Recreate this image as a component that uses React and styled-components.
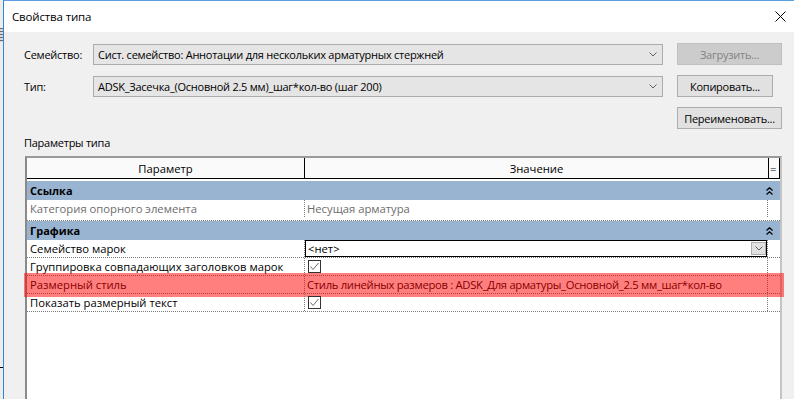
import React from 'react';
import styled, { createGlobalStyle } from 'styled-components';

const GlobalStyle = createGlobalStyle`
  html, body {
    margin: 0;
    padding: 0;
  }
  body {
    font-family: "Open Sans", "Noto Sans", sans-serif;
    font-size: 11px;
    color: #000;
    background: #f0f0f0;
  }
`;

const Screen = styled.div`
  width: 794px;
  height: 399px;
  overflow: hidden;
  display: flex;
  background: #f0f0f0;
`;

const Behind = styled.div`
  width: 3px;
  flex: none;
  display: flex;
  flex-direction: column;
  background: #ececec;
`;

const BehindIcon = styled.div`
  margin-top: 28px;
  height: 14px;
  background: repeating-linear-gradient(180deg, #6a6a6a 0 1px, #d8d8d8 1px 3px);
`;

const BehindTick = styled.div`
  margin-top: 325px;
  height: 1px;
  background: #000;
`;

const Window = styled.div`
  flex: 1;
  display: flex;
  flex-direction: column;
  border-left: 1px solid #2b88d8;
  border-top: 1px solid #5a9ee0;
`;

const TitleBar = styled.div`
  height: 31px;
  flex: none;
  display: flex;
  align-items: center;
  justify-content: space-between;
  padding: 0 8px 0 8px;
  background: #fff;
  font-size: 11.5px;
  letter-spacing: -0.15px;
`;

const Content = styled.div`
  flex: 1;
  display: flex;
  flex-direction: column;
  padding: 11px 0 0 20px;
  letter-spacing: -0.25px;
`;

const Form = styled.div`
  display: grid;
  grid-template-columns: 69px 570px 119px;
  grid-auto-rows: 22px;
  row-gap: 10px;
  align-items: center;
`;

const Label = styled.span`
  grid-column: 1;
  white-space: nowrap;
`;

const Combo = styled.div`
  grid-column: 2;
  height: 21px;
  box-sizing: border-box;
  display: flex;
  align-items: center;
  justify-content: space-between;
  padding: 0 5px 0 4px;
  background: #e5e5e5;
  border: 1px solid #acacac;
  white-space: nowrap;
`;

const Button = styled.div`
  width: ${(p) => p.$w}px;
  height: 22px;
  box-sizing: border-box;
  display: flex;
  align-items: center;
  justify-content: center;
  background: ${(p) => (p.$disabled ? '#cccccc' : '#e1e1e1')};
  border: 1px solid ${(p) => (p.$disabled ? '#bfbfbf' : '#adadad')};
  color: ${(p) => (p.$disabled ? '#838383' : '#000')};
  white-space: nowrap;
`;

const ButtonCell = styled.div`
  grid-column: 3;
  display: flex;
  justify-content: flex-start;
  padding-left: 14px;
`;

const SectionLabel = styled.div`
  margin-top: 6px;
  line-height: 16px;
`;

const Table = styled.div`
  margin: 5px 0 0 1px;
  width: 757px;
  height: 260px;
  flex: none;
  box-sizing: border-box;
  background: #fff;
  border-top: 2px solid #9a9a9a;
  border-left: 2px solid #8a8a8a;
  border-right: 2px solid #c4c4c4;
  display: flex;
  flex-direction: column;
  font-size: 11.25px;
  letter-spacing: 0;
`;

const Header = styled.div`
  display: grid;
  grid-template-columns: 278px 463px 12px;
  height: 21px;
  box-sizing: border-box;
  background: #fafafa;
  border-bottom: 1px solid #000;
`;

const HeadCell = styled.div`
  display: flex;
  align-items: center;
  justify-content: ${(p) => (p.$left ? 'flex-start' : 'center')};
  border-right: ${(p) => (p.$edge ? '1px solid #000' : 'none')};
  border-left: ${(p) => (p.$boxed ? '1px solid #000' : 'none')};
  padding-left: ${(p) => (p.$boxed ? '1px' : '0')};
`;

const Body = styled.div`
  padding-top: 2px;
  display: flex;
  flex-direction: column;
`;

const GroupRow = styled.div`
  height: 19px;
  display: flex;
  align-items: center;
  justify-content: space-between;
  padding: 0 7px 0 3px;
  background: #99b4d1;
  font-weight: 700;
  font-size: 11px;
`;

const Row = styled.div`
  position: relative;
  height: ${(p) => p.$h}px;
  box-sizing: border-box;
  display: grid;
  grid-template-columns: 278px 463px 12px;
  padding-bottom: ${(p) => (p.$h > 19 ? 3 : 0)}px;
  border-bottom: 1px dotted #7a7a7a;
  color: ${(p) => (p.$muted ? '#6d6d6d' : '#000')};
`;

const NameCell = styled.div`
  display: flex;
  align-items: center;
  padding-left: 3px;
  border-right: 1px dotted #7a7a7a;
  white-space: nowrap;
  overflow: hidden;
`;

const ValueCell = styled.div`
  display: flex;
  align-items: center;
  padding-left: 2px;
  border-right: 1px dotted #7a7a7a;
  white-space: nowrap;
  overflow: hidden;
  letter-spacing: ${(p) => (p.$tight ? '-0.3px' : '0')};
`;

const InlineSelect = styled.div`
  margin-left: -2px;
  flex: 1;
  align-self: stretch;
  box-sizing: border-box;
  display: flex;
  align-items: center;
  justify-content: space-between;
  padding: 0 0 0 2px;
  border: 1px solid #000;
  background: #fff;
`;

const DropButton = styled.div`
  width: 15px;
  height: 13px;
  box-sizing: border-box;
  display: flex;
  align-items: center;
  justify-content: center;
  background: #e1e1e1;
  border: 1px solid #adadad;
`;

const CheckBox = styled.div`
  width: 13px;
  height: 13px;
  margin-left: 1px;
  box-sizing: border-box;
  border: 1px solid #333;
  background: #fff;
  display: flex;
  align-items: center;
  justify-content: center;
`;

const Highlight = styled.div`
  position: absolute;
  left: -3px;
  right: -4px;
  top: -3px;
  bottom: -4px;
  background: rgba(255, 0, 0, 0.5);
  pointer-events: none;
`;

const Chevron = () => (
  <svg width="8" height="5" viewBox="0 0 8 5">
    <polyline points="0.5,0.5 4,4 7.5,0.5" fill="none" stroke="#606060" strokeWidth="1" />
  </svg>
);

const CloseIcon = () => (
  <svg width="11" height="11" viewBox="0 0 11 11">
    <line x1="0.5" y1="0.5" x2="10.5" y2="10.5" stroke="#000" strokeWidth="1" />
    <line x1="10.5" y1="0.5" x2="0.5" y2="10.5" stroke="#000" strokeWidth="1" />
  </svg>
);

const Collapse = () => (
  <svg width="7" height="8" viewBox="0 0 7 8">
    <polyline points="0.5,3.5 3.5,0.8 6.5,3.5" fill="none" stroke="#000" strokeWidth="1.3" />
    <polyline points="0.5,7.5 3.5,4.8 6.5,7.5" fill="none" stroke="#000" strokeWidth="1.3" />
  </svg>
);

const Tick = () => (
  <svg width="11" height="11" viewBox="0 0 11 11">
    <polyline points="1.5,5.5 4,8.5 9.5,2" fill="none" stroke="#6a6a6a" strokeWidth="1" />
  </svg>
);

const groups = [
  {
    title: 'Ссылка',
    rows: [
      { name: 'Категория опорного элемента', value: 'Несущая арматура', muted: true, h: 21 },
    ],
  },
  {
    title: 'Графика',
    rows: [
      { name: 'Семейство марок', kind: 'select', value: '<нет>', h: 18 },
      { name: 'Группировка совпадающих заголовков марок', kind: 'check', h: 18 },
      {
        name: 'Размерный стиль',
        value: 'Стиль линейных размеров : ADSK_Для арматуры_Основной_2.5 мм_шаг*кол-во',
        highlight: true,
        h: 18,
      },
      { name: 'Показать размерный текст', kind: 'check', h: 18 },
    ],
  },
];

const renderValue = (row) => {
  if (row.kind === 'select') {
    return (
      <InlineSelect>
        {row.value}
        <DropButton>
          <Chevron />
        </DropButton>
      </InlineSelect>
    );
  }
  if (row.kind === 'check') {
    return (
      <CheckBox>
        <Tick />
      </CheckBox>
    );
  }
  return row.value;
};

const App = () => (
  <>
    <GlobalStyle />
    <Screen>
      <Behind>
        <BehindIcon />
        <BehindTick />
      </Behind>
      <Window>
        <TitleBar>
          <span>Свойства типа</span>
          <CloseIcon />
        </TitleBar>
        <Content>
          <Form>
            <Label>Семейство:</Label>
            <Combo>
              Сист. семейство: Аннотации для нескольких арматурных стержней
              <Chevron />
            </Combo>
            <ButtonCell>
              <Button $w={105} $disabled>Загрузить...</Button>
            </ButtonCell>

            <Label>Тип:</Label>
            <Combo>
              ADSK_Засечка_(Основной 2.5 мм)_шаг*кол-во (шаг 200)
              <Chevron />
            </Combo>
            <ButtonCell>
              <Button $w={96}>Копировать...</Button>
            </ButtonCell>

            <ButtonCell>
              <Button $w={105}>Переименовать...</Button>
            </ButtonCell>
          </Form>

          <SectionLabel>Параметры типа</SectionLabel>

          <Table>
            <Header>
              <HeadCell $edge>Параметр</HeadCell>
              <HeadCell>Значение</HeadCell>
              <HeadCell $boxed $edge $left>=</HeadCell>
            </Header>
            <Body>
              {groups.map((group) => (
                <React.Fragment key={group.title}>
                  <GroupRow>
                    {group.title}
                    <Collapse />
                  </GroupRow>
                  {group.rows.map((row) => (
                    <Row key={row.name} $h={row.h} $muted={row.muted}>
                      <NameCell>{row.name}</NameCell>
                      <ValueCell $tight={row.highlight}>{renderValue(row)}</ValueCell>
                      <div />
                      {row.highlight && <Highlight />}
                    </Row>
                  ))}
                </React.Fragment>
              ))}
            </Body>
          </Table>
        </Content>
      </Window>
    </Screen>
  </>
);

export default App;
